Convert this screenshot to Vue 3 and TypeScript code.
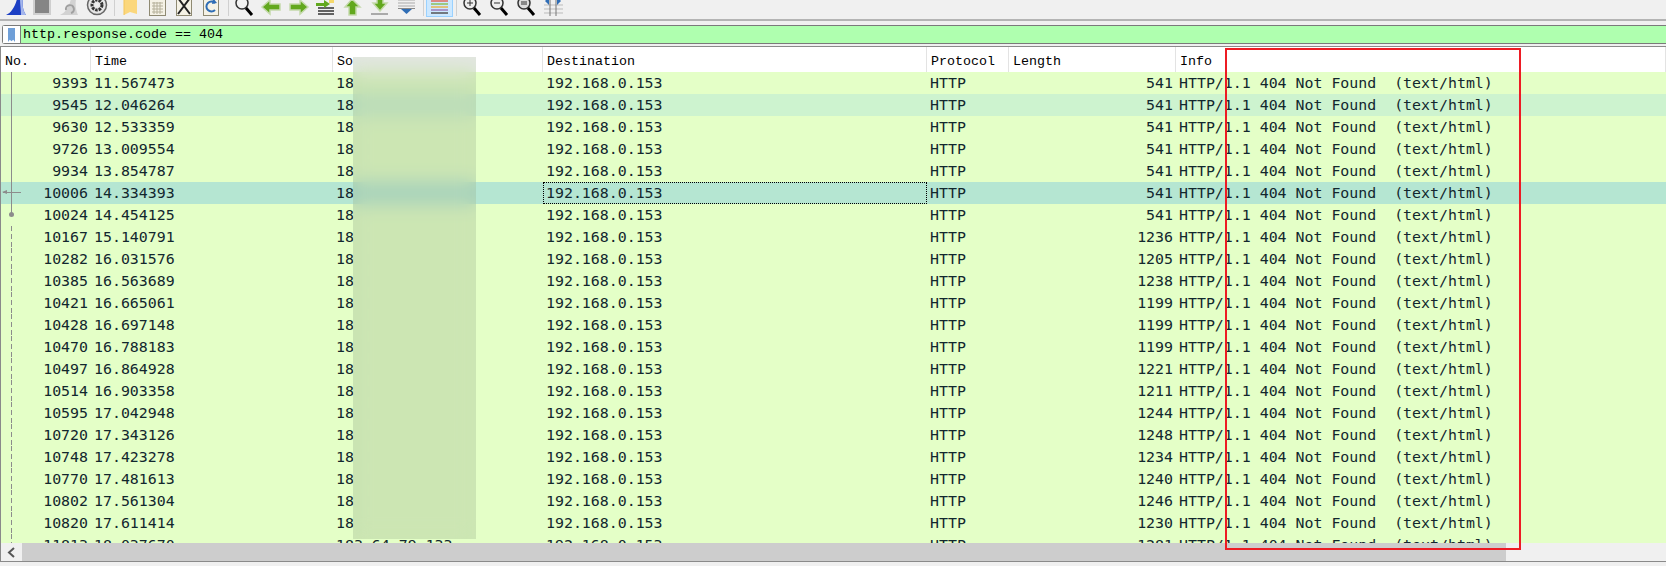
<script setup lang="ts">
interface Packet {
  no: number;
  time: string;
  length: number;
  mark?: 'first' | 'solid' | 'arrow' | 'dot' | 'dash';
  tone?: 'alt' | 'selected';
  source?: string;
}

const packets: Packet[] = [
  { no: 9393, time: '11.567473', length: 541, mark: 'first' },
  { no: 9545, time: '12.046264', length: 541, mark: 'solid', tone: 'alt' },
  { no: 9630, time: '12.533359', length: 541, mark: 'solid' },
  { no: 9726, time: '13.009554', length: 541, mark: 'solid' },
  { no: 9934, time: '13.854787', length: 541, mark: 'solid' },
  { no: 10006, time: '14.334393', length: 541, mark: 'arrow', tone: 'selected' },
  { no: 10024, time: '14.454125', length: 541, mark: 'dot' },
  { no: 10167, time: '15.140791', length: 1236, mark: 'dash' },
  { no: 10282, time: '16.031576', length: 1205, mark: 'dash' },
  { no: 10385, time: '16.563689', length: 1238, mark: 'dash' },
  { no: 10421, time: '16.665061', length: 1199, mark: 'dash' },
  { no: 10428, time: '16.697148', length: 1199, mark: 'dash' },
  { no: 10470, time: '16.788183', length: 1199, mark: 'dash' },
  { no: 10497, time: '16.864928', length: 1221, mark: 'dash' },
  { no: 10514, time: '16.903358', length: 1211, mark: 'dash' },
  { no: 10595, time: '17.042948', length: 1244, mark: 'dash' },
  { no: 10720, time: '17.343126', length: 1248, mark: 'dash' },
  { no: 10748, time: '17.423278', length: 1234, mark: 'dash' },
  { no: 10770, time: '17.481613', length: 1240, mark: 'dash' },
  { no: 10802, time: '17.561304', length: 1246, mark: 'dash' },
  { no: 10820, time: '17.611414', length: 1230, mark: 'dash' },
  { no: 11813, time: '18.037670', length: 1281, mark: 'dash', source: '183.64.79.133' },
];

// the rest of the source column sits under the blurred block
const columns = ['No.', 'Time', 'So', 'Destination', 'Protocol', 'Length', 'Info'];
const info = 'HTTP/1.1 404 Not Found  (text/html)';
</script>

<template>
  <div class="app">
    <div class="toolbar">
      <span class="tool">
        <svg viewBox="0 0 27 24"><path d="M3 23C8 21 12 15 14 7L20 7C19 13 20 19 23 23Z" fill="#1c3fc4" /><path d="M17 7L20 7C19 13 20 19 23 23L18 23C18 17 17 12 17 7Z" fill="#a4b6ec" /></svg>
      </span>
      <span class="tool">
        <svg viewBox="0 0 27 24"><rect x="4" y="3" width="16" height="19" fill="#858585" stroke="#cfcfcf" stroke-width="2" /></svg>
      </span>
      <span class="tool">
        <svg viewBox="0 0 27 24"><path d="M3 23C8 21 12 15 14 7L19 7C18 13 19 19 21 23Z" fill="#d2d2d2" /><path d="M9 18A4 4 0 1 1 14 21" fill="none" stroke="#a0a0a0" stroke-width="2" /></svg>
      </span>
      <span class="tool">
        <svg viewBox="0 0 27 24"><circle cx="13" cy="13" r="9.500" fill="#e6e6e6" stroke="#666" stroke-width="1.500" /><circle cx="13" cy="13" r="5" fill="none" stroke="#333" stroke-width="3" stroke-dasharray="2.500 1" /><circle cx="13" cy="13" r="2" fill="#eee" /></svg>
      </span>
      <span class="sep"></span>
      <span class="tool">
        <svg viewBox="0 0 27 24"><path d="M7 2H17L20 8V22L13 20L7 23Z" fill="#fbd77c" /><path d="M7 2V23" stroke="#f4c65a" /></svg>
      </span>
      <span class="tool">
        <svg viewBox="0 0 27 24"><rect x="5.500" y="4.500" width="16" height="19" fill="#f5f2e6" stroke="#8f8a73" /><path d="M8 11H19M8 14H19M8 17H19M8 20H19M10 10V22M13 10V22M16 10V22" stroke="#b5b09a" /></svg>
      </span>
      <span class="tool">
        <svg viewBox="0 0 27 24"><rect x="5.500" y="4.500" width="15" height="19" fill="#f5f2e6" stroke="#8f8a73" /><path d="M7 6L19 22M19 6L7 22" stroke="#222" stroke-width="2" /></svg>
      </span>
      <span class="tool">
        <svg viewBox="0 0 27 24"><rect x="5.500" y="4.500" width="15" height="19" fill="#f5f2e6" stroke="#8f8a73" /><path d="M17 11A5 5 0 1 0 17 18" fill="none" stroke="#2f6db5" stroke-width="2" /><path d="M15 6L19 11L14 12Z" fill="#2f6db5" /></svg>
      </span>
      <span class="sep"></span>
      <span class="tool">
        <svg viewBox="0 0 27 24"><circle cx="11" cy="11" r="6" fill="#f2f2f2" stroke="#333" stroke-width="1.500" /><path d="M15 16L21 23" stroke="#000" stroke-width="3" /></svg>
      </span>
      <span class="tool">
        <svg viewBox="0 0 27 24"><path d="M4 15L12 8V12H22V18H12V22Z" fill="#62a81e" stroke="#c4d9ab" stroke-width="1.500" /></svg>
      </span>
      <span class="tool">
        <svg viewBox="0 0 27 24"><path d="M23 15L15 8V12H5V18H15V22Z" fill="#62a81e" stroke="#c4d9ab" stroke-width="1.500" /></svg>
      </span>
      <span class="tool">
        <svg viewBox="0 0 27 24"><path d="M6 16H22M6 19H22M6 22H22" stroke="#333" stroke-width="1.500" /><path d="M4 11H12V8L18 12L12 16V14H4Z" fill="#62a81e" /><rect x="17" y="8" width="5" height="3" fill="#f5d86b" /></svg>
      </span>
      <span class="tool">
        <svg viewBox="0 0 27 24"><path d="M13 7L21 15H17V23H10V15H6Z" fill="#62a81e" stroke="#c4d9ab" stroke-width="1.500" /></svg>
      </span>
      <span class="tool">
        <svg viewBox="0 0 27 24"><path d="M14 17L21 9H17V2H11V9H7Z" transform="translate(0 2)" fill="#62a81e" stroke="#c4d9ab" stroke-width="1.500" /><rect x="5" y="21" width="17" height="2" fill="#aaa" /></svg>
      </span>
      <span class="tool">
        <svg viewBox="0 0 27 24"><path d="M5 8H22M5 11H22M5 14H22" stroke="#aaa" /><rect x="5" y="16" width="17" height="1" fill="#888" /><path d="M8 17H19L13.500 22Z" fill="#2f6db5" /></svg>
      </span>
      <span class="sep"></span>
      <span class="tool tool-on">
        <svg viewBox="0 0 27 24"><path d="M5 9H22" stroke="#e2685c" stroke-width="1.500" /><path d="M5 12H22" stroke="#8fbf5a" stroke-width="1.500" /><path d="M5 15H22" stroke="#e8b352" stroke-width="1.500" /><path d="M5 18H22" stroke="#9c7bb8" stroke-width="1.500" /><path d="M5 21H22" stroke="#555" stroke-width="1.500" /></svg>
      </span>
      <span class="sep"></span>
      <span class="tool">
        <svg viewBox="0 0 27 24"><circle cx="11" cy="11" r="6" fill="#eee" stroke="#333" stroke-width="1.500" /><path d="M8 11H14M11 8V14" stroke="#333" /><path d="M15 16L21 23" stroke="#000" stroke-width="3" /></svg>
      </span>
      <span class="tool">
        <svg viewBox="0 0 27 24"><circle cx="11" cy="11" r="6" fill="#eee" stroke="#333" stroke-width="1.500" /><path d="M8 11H14" stroke="#333" /><path d="M15 16L21 23" stroke="#000" stroke-width="3" /></svg>
      </span>
      <span class="tool">
        <svg viewBox="0 0 27 24"><circle cx="11" cy="11" r="6" fill="#ddd" stroke="#333" stroke-width="1.500" /><path d="M8 10H14M8 12H14" stroke="#333" /><path d="M15 16L21 23" stroke="#000" stroke-width="3" /></svg>
      </span>
      <span class="tool">
        <svg viewBox="0 0 27 24"><path d="M4 13H23M4 17H23M4 21H23" stroke="#bbb" /><path d="M10 4V24M16 4V24" stroke="#777" /><path d="M9 5V13L5 9ZM17 5V13L21 9Z" fill="#2f6db5" /></svg>
      </span>
    </div>

    <div class="filter">
      <span class="bookmark">
        <svg width="9" height="14" viewBox="0 0 10 16"><path d="M1 0H9V16L7 13.500L5 15L3 13.500L1 16Z" fill="#6f9fd8" /></svg>
      </span>
      <span class="filter-text">http.response.code == 404</span>
    </div>

    <div class="list">
      <div class="head">
        <span v-for="col in columns" :key="col" class="head-cell">{{ col }}</span>
      </div>
      <div class="rows">
        <div
          v-for="p in packets"
          :key="p.no"
          class="row"
          :class="p.tone"
        >
          <span class="cell num"><i v-if="p.mark" class="rel" :class="p.mark"></i>{{ p.no }}</span>
          <span class="cell">{{ p.time }}</span>
          <span class="cell">{{ p.source ?? '18' }}</span>
          <span class="cell" :class="{ focus: p.tone === 'selected' }">192.168.0.153</span>
          <span class="cell">HTTP</span>
          <span class="cell num">{{ p.length }}</span>
          <span class="cell">{{ info }}</span>
        </div>
      </div>
      <div class="hscroll">
        <span class="hscroll-btn">
          <svg width="9" height="11" viewBox="0 0 9 11"><path d="M7 1L2 5.500L7 10" fill="none" stroke="#555" stroke-width="2" /></svg>
        </span>
        <span class="hscroll-thumb"></span>
      </div>
    </div>

    <div class="redact"></div>
    <div class="callout"></div>
  </div>
</template>

<style scoped>
.app {
  position: relative;
  width: 1666px;
  height: 566px;
  overflow: hidden;
  display: flex;
  flex-direction: column;
  background: #f0f0f0;
}

.toolbar {
  height: 21px;
  flex: none;
  display: flex;
  padding-left: 3px;
  border-bottom: 2px solid #b4b4b4;
  box-sizing: border-box;
  overflow: hidden;
}

.tool {
  width: 27px;
  height: 24px;
  margin-top: -8px;
  flex: none;
}

.tool svg {
  display: block;
  width: 27px;
  height: 24px;
}

.tool-on {
  background: #cce8ff;
  outline: 1px solid #99d1ff;
  outline-offset: -1px;
  height: 25px;
}

.sep {
  width: 6px;
  flex: none;
  display: flex;
  justify-content: center;
}

.sep::before {
  content: '';
  width: 1px;
  height: 16px;
  background: #d0d0d0;
}

.filter {
  margin: 4px 0 2px 2px;
  height: 19px;
  flex: none;
  display: flex;
  box-sizing: border-box;
  border: 1px solid #7a7a7a;
  border-right: none;
  border-radius: 3px 0 0 3px;
  background: #afffaf;
  font-family: 'Liberation Mono', monospace;
  font-size: 13.33px;
  color: #000;
}

.bookmark {
  width: 18px;
  flex: none;
  display: flex;
  align-items: center;
  justify-content: center;
  background: #fff;
  border-right: 1px solid #7a7a7a;
  box-sizing: border-box;
}

.filter-text {
  padding-left: 2px;
  line-height: 17px;
}

.list {
  flex: none;
  height: 516px;
  display: flex;
  flex-direction: column;
  box-sizing: border-box;
  border-top: 1px solid #8a8a8a;
  border-bottom: 1px solid #8a8a8a;
  border-left: 1px solid #8a8a8a;
}

.head,
.row {
  display: grid;
  grid-template-columns: 90px 242px 210px 384px 82px 167px 1fr;
}

.head {
  height: 25px;
  flex: none;
  background: #fff;
  font-family: 'Liberation Mono', monospace;
  font-size: 13.33px;
  color: #000;
}

.head-cell {
  padding-left: 4px;
  line-height: 29px;
  overflow: hidden;
  border-right: 1px solid #e3e3e3;
}

.rows {
  height: 471px;
  flex: none;
  overflow: hidden;
  background: #e4ffc7;
}

.row {
  height: 22px;
  background: #e4ffc7;
  color: #12272e;
  font-family: 'DejaVu Sans Mono', monospace;
  font-size: 14.9px;
  line-height: 22px;
}

.row.alt {
  background: #cdf3cf;
}

.row.selected {
  background: #b5e6d2;
}

.cell {
  position: relative;
  padding-left: 3px;
  white-space: pre;
  overflow: hidden;
}

.num {
  padding: 0 3px 0 0;
  text-align: right;
}

.focus {
  outline: 1px dotted #000;
  outline-offset: -1px;
}

.rel {
  position: absolute;
  left: 10px;
  top: 0;
  width: 1px;
  height: 22px;
  background: #8c8c8c;
}

.rel.dash {
  background: repeating-linear-gradient(to bottom, #8c8c8c 0 5px, transparent 5px 8px);
}

.rel.arrow::before {
  content: '';
  position: absolute;
  left: -8px;
  top: 10px;
  width: 18px;
  height: 1px;
  background: #8c8c8c;
}

.rel.arrow::after {
  content: '';
  position: absolute;
  left: -9px;
  top: 8px;
  border-style: solid;
  border-width: 2.5px 5px 2.5px 0;
  border-color: transparent #8c8c8c transparent transparent;
}

.rel.dot {
  height: 11px;
}

.rel.dot::after {
  content: '';
  position: absolute;
  left: -2px;
  top: 8px;
  width: 5px;
  height: 5px;
  border-radius: 50%;
  background: #8c8c8c;
}

.hscroll {
  height: 18px;
  flex: none;
  display: flex;
  background: #f0f0f0;
}

.hscroll-btn {
  width: 21px;
  flex: none;
  display: flex;
  align-items: center;
  justify-content: center;
}

.hscroll-thumb {
  width: 1484px;
  flex: none;
  background: #cdcdcd;
}

.redact {
  position: absolute;
  left: 353px;
  top: 57px;
  width: 123px;
  height: 482px;
  backdrop-filter: blur(9px);
  background: rgba(110, 130, 100, 0.2);
}

.callout {
  position: absolute;
  left: 1225px;
  top: 48px;
  width: 296px;
  height: 502px;
  box-sizing: border-box;
  border: 2px solid #ed1c24;
}
</style>

<style>
body {
  overflow: hidden;
}
</style>
